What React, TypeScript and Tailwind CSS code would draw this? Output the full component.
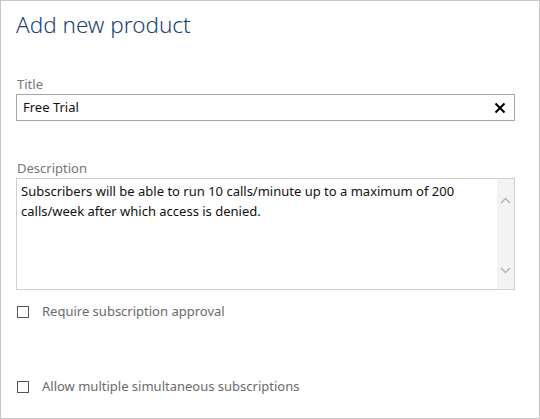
export default function App() {
  return (
    <div className="w-[540px] h-[419px] bg-white border border-[#c6c6c6] font-['Segoe_UI','Noto_Sans',sans-serif] text-[13px] overflow-hidden">
      <div className="pl-[15px] pr-[24px] pt-[8px]">
        <h1 className="text-[22.5px] font-light text-[#1a4570] leading-[32px]">Add new product</h1>

        {/* Title field */}
        <div className="mt-[35px]">
          <label className="block text-[#767676] leading-[17px] pl-px">Title</label>
          <div className="mt-[1px] h-[27px] border border-[#a6a6a6] flex items-center pl-[6px] pr-[8px]">
            <span className="flex-1 text-[#111]">Free Trial</span>
            <svg width="12" height="12" viewBox="0 0 12 12" className="text-black">
              <path d="M1.5 1.5 L10.5 10.5 M10.5 1.5 L1.5 10.5" stroke="currentColor" strokeWidth="2" />
            </svg>
          </div>
        </div>

        {/* Description */}
        <div className="mt-[39px]">
          <label className="block text-[#767676] leading-[17px] pl-px">Description</label>
          <div className="mt-[1px] h-[112px] border border-[#cfcfcf] flex">
            <div className="flex-1 px-[4px] pt-[2px] text-[#111] leading-[20px]">
              Subscribers will be able to run 10 calls/minute up to a maximum of 200 calls/week after which access is denied.
            </div>
            <div className="w-[17px] bg-[#f3f3f3] flex flex-col justify-between items-center pt-[18px] pb-[15px]">
              <svg width="11" height="7" viewBox="0 0 11 7" className="text-[#b5b5b5]">
                <path d="M1 6 L5.5 1.5 L10 6" fill="none" stroke="currentColor" strokeWidth="1.5" />
              </svg>
              <svg width="11" height="7" viewBox="0 0 11 7" className="text-[#b5b5b5]">
                <path d="M1 1 L5.5 5.5 L10 1" fill="none" stroke="currentColor" strokeWidth="1.5" />
              </svg>
            </div>
          </div>
        </div>

        {/* Checkboxes */}
        <div className="mt-[13px] flex items-center gap-[13px] pl-px">
          <div className="w-[12px] h-[12px] border border-[#555]" />
          <span className="text-[#6b6b6b] leading-[17px]">Require subscription approval</span>
        </div>
        <div className="mt-[58px] flex items-center gap-[13px] pl-px">
          <div className="w-[12px] h-[12px] border border-[#555]" />
          <span className="text-[#6b6b6b] leading-[17px]">Allow multiple simultaneous subscriptions</span>
        </div>
      </div>
    </div>
  );
}
